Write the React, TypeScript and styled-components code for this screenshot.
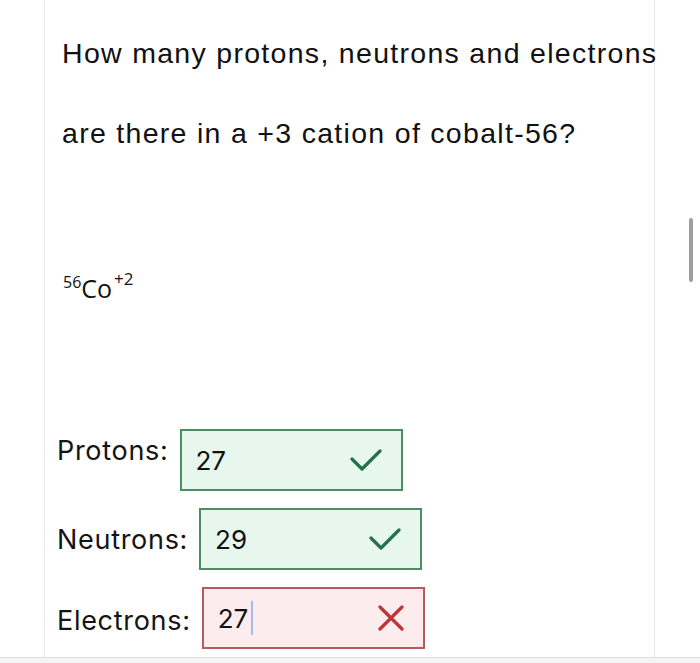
import styled, { createGlobalStyle } from "styled-components";

const Global = createGlobalStyle`
  html, body {
    margin: 0;
    padding: 0;
    background: #f5f5f5;
  }
  body {
    font-family: "Liberation Sans", Arial, sans-serif;
    color: #111;
  }
`

const Page = styled.div`
  height: 657px;
  background: #fff;
  border-bottom: 1px solid #dcdcdc;
  display: flex;
  position: relative;
`

const Column = styled.div`
  margin-left: 44px;
  width: 611px;
  border-left: 1px solid #e8e8e8;
  border-right: 1px solid #e8e8e8;
  padding-top: 13px;
  box-sizing: border-box;
`

const Question = styled.p`
  margin: 0;
  padding-left: 17px;
  font-size: 28.5px;
  line-height: 80px;
  letter-spacing: 1.3px;
  white-space: nowrap;
`

const Formula = styled.div`
  margin-top: 99px;
  padding-left: 18px;
  font-family: "Open Sans", "Noto Sans", sans-serif;
  font-size: 25px;
  line-height: 32px;
  sup {
    font-size: 16px;
    line-height: 0;
    vertical-align: 10px;
  }
  sup + span + sup {
    font-size: 17px;
    margin-left: 2px;
    vertical-align: 13px;
  }
`

const Answers = styled.div`
  margin-top: 125px;
  padding-left: 12px;
  display: flex;
  flex-direction: column;
  gap: 17px;
`

const Row = styled.div<{ $lift?: number }>`
  display: flex;
  align-items: center;
  gap: 11px;
  & > span {
    position: relative;
    top: ${p => -(p.$lift ?? 0)}px;
  }
`

const Label = styled.span`
  font-family: Inter, "Noto Sans", sans-serif;
  font-size: 27px;
  letter-spacing: 0.7px;
  color: #141414;
`

const Box = styled.div<{ $ok: boolean }>`
  width: 223px;
  height: 62px;
  box-sizing: border-box;
  border: 2px solid ${p => (p.$ok ? "#4e8d62" : "#b65a60")};
  background: ${p => (p.$ok ? "#e7f7ee" : "#fdecee")};
  display: flex;
  align-items: center;
  padding: 0 19px 0 14px;
  font-family: Inter, Roboto, sans-serif;
  font-size: 26px;
  color: #111;
`

const Value = styled.span`
  flex: 1;
  display: flex;
  align-items: center;
`

const Caret = styled.i`
  display: inline-block;
  width: 2px;
  height: 34px;
  margin-left: 3px;
  background: #a9b6ea;
`

const Scroll = styled.div`
  position: absolute;
  right: 7px;
  top: 218px;
  width: 4px;
  height: 64px;
  border-radius: 2px;
  background: #9e9e9e;
`

const Check = () => (
  <svg width="32" height="24" viewBox="0 0 32 24">
    <polyline points="2,11 12,21 30,3" fill="none" stroke="#24704a" strokeWidth="3.2" strokeLinecap="round" strokeLinejoin="round" />
  </svg>
)

const Cross = () => (
  <svg width="26" height="26" viewBox="0 0 26 26">
    <path d="M2 2 L24 24 M24 2 L2 24" stroke="#c0333a" strokeWidth="3.2" strokeLinecap="round" />
  </svg>
)

export default function App() {
  return (
    <>
      <Global />
      <Page>
        <Column>
          <Question>
            How many protons, neutrons and electrons
            <br />
            are there in a +3 cation of cobalt-56?
          </Question>
          <Formula>
            <sup>56</sup><span>Co</span><sup>+2</sup>
          </Formula>
          <Answers>
            <Row $lift={10}>
              <Label>Protons:</Label>
              <Box $ok>
                <Value>27</Value>
                <Check />
              </Box>
            </Row>
            <Row>
              <Label>Neutrons:</Label>
              <Box $ok>
                <Value>29</Value>
                <Check />
              </Box>
            </Row>
            <Row $lift={-2}>
              <Label>Electrons:</Label>
              <Box $ok={false}>
                <Value>
                  27<Caret />
                </Value>
                <Cross />
              </Box>
            </Row>
          </Answers>
        </Column>
        <Scroll />
      </Page>
    </>
  )
}
